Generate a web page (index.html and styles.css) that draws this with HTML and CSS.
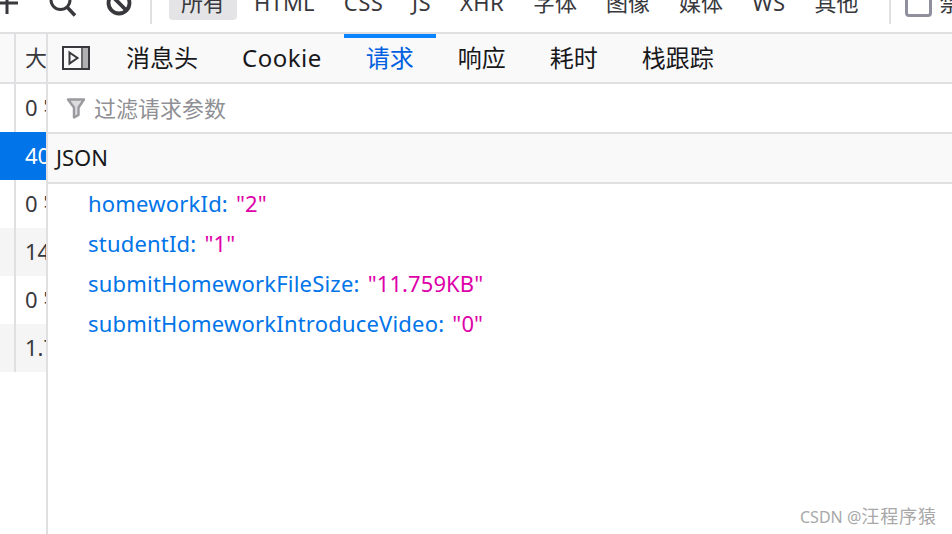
FILE: index.html
```html
<!DOCTYPE html>
<html lang="zh">
<head>
<meta charset="utf-8">
<title>网络请求</title>
<link rel="stylesheet" href="styles.css">
</head>
<body>
<div class="app">
  <header class="toolbar">
    <svg class="tool-icons" width="150" height="32" viewBox="0 0 150 32">
      <path d="M7 -8V14M-4 3H18" fill="none" stroke="#38383d" stroke-width="3"/>
      <circle cx="60.5" cy="0" r="9.5" fill="none" stroke="#38383d" stroke-width="3"/>
      <path d="M67 7L75 15.500" fill="none" stroke="#38383d" stroke-width="3.500"/>
      <circle cx="119" cy="3" r="10.500" fill="none" stroke="#38383d" stroke-width="3.800"/>
      <path d="M111 -5L127 11" fill="none" stroke="#38383d" stroke-width="3.800"/>
    </svg>
    <span class="sep"></span>
    <nav class="filters">
      <span class="filter active">所有</span>
      <span class="filter html">HTML</span>
      <span class="filter latin">CSS</span>
      <span class="filter latin">JS</span>
      <span class="filter latin">XHR</span>
      <span class="filter">字体</span>
      <span class="filter">图像</span>
      <span class="filter">媒体</span>
      <span class="filter latin">WS</span>
      <span class="filter">其他</span>
    </nav>
    <span class="sep sep-right"></span>
    <span class="checkbox"></span>
    <span class="check-label">禁用缓存</span>
  </header>
  <main class="content">
    <aside class="list">
      <div class="row head"><span class="cell">大小</span></div>
      <div class="row"><span class="cell">0 字节</span></div>
      <div class="row selected"><span class="cell">40 字节</span></div>
      <div class="row"><span class="cell">0 字节</span></div>
      <div class="row odd"><span class="cell">14 字节</span></div>
      <div class="row"><span class="cell">0 字节</span></div>
      <div class="row odd"><span class="cell">1.7 KB</span></div>
    </aside>
    <section class="panel">
      <div class="tabs">
        <svg class="panel-toggle" width="28" height="24" viewBox="0 0 28 24">
          <rect x="1" y="1" width="26" height="22" fill="none" stroke="#38383d" stroke-width="2"/>
          <rect x="21" y="2" width="5" height="20" fill="#b1b1b3"/>
          <path d="M20 1V23" stroke="#38383d" stroke-width="1.500"/>
          <path d="M7.500 6.500L15.500 12L7.500 17.500Z" fill="none" stroke="#38383d" stroke-width="2"/>
        </svg>
        <span class="tab">消息头</span>
        <span class="tab tab-latin">Cookie</span>
        <span class="tab current">请求</span>
        <span class="tab">响应</span>
        <span class="tab">耗时</span>
        <span class="tab">栈跟踪</span>
      </div>
      <div class="filter-bar">
        <svg class="funnel" width="20" height="22" viewBox="0 0 20 22">
          <path d="M2 2.500H18L12.500 10.500V18L8 20.500V10.500Z" fill="#dcdcde" stroke="#9a9a9e" stroke-width="2.400" stroke-linejoin="round"/>
        </svg>
        <span class="filter-text">过滤请求参数</span>
      </div>
      <div class="section-title">JSON</div>
      <dl class="props">
        <div class="prop"><dt>homeworkId:</dt><dd>"2"</dd></div>
        <div class="prop"><dt>studentId:</dt><dd>"1"</dd></div>
        <div class="prop"><dt>submitHomeworkFileSize:</dt><dd>"11.759KB"</dd></div>
        <div class="prop"><dt>submitHomeworkIntroduceVideo:</dt><dd>"0"</dd></div>
      </dl>
    </section>
  </main>
  <div class="watermark">CSDN @<span class="watermark-name">汪程序猿</span></div>
</div>
</body>
</html>
```

FILE: styles.css
```css
* { box-sizing: border-box; }
html, body { margin: 0; padding: 0; background: #fff; }
body { font-family: "Noto Sans", "Noto Sans CJK SC", sans-serif; }
.app { position: relative; width: 952px; height: 534px; overflow: hidden; display: flex; flex-direction: column; }

.toolbar { height: 34px; flex: none; display: flex; align-items: flex-start; border-bottom: 2px solid #e0e0e2; overflow: hidden; color: #38383d; font-size: 22px; white-space: nowrap; }
.tool-icons { flex: none; }
.sep { flex: none; width: 2px; height: 24px; background: #e0e0e2; }
.filters { display: flex; gap: 5px; margin-left: 17px; }
.filter { height: 36px; margin-top: -16px; padding: 0 12px; line-height: 36px; border-radius: 4px; }
.filter.html { letter-spacing: 0.2px; }
.filter.latin { letter-spacing: 0.4px; }
.filter.active { background: #e4e4e6; }
.sep-right { margin-left: 19px; }
.checkbox { flex: none; width: 27px; height: 27px; margin: -10px 0 0 14px; border: 3px solid #8f8f9d; border-radius: 4px; }
.check-label { margin: -16px 0 0 7px; line-height: 36px; }

.content { flex: 1; display: flex; min-height: 0; }
.list { width: 48px; flex: none; border-right: 2px solid #e0e0e2; overflow: hidden; color: #38383d; font-size: 22px; white-space: nowrap; }
.row { height: 48px; width: 46px; overflow: hidden; padding-left: 14px; line-height: 46px; }
.cell { display: block; height: 100%; padding-left: 9px; border-left: 2px solid #e0e0e2; }
.row.head { height: 50px; background: #f9f9fa; border-bottom: 2px solid #e0e0e2; }
.row.selected { background: #0074e8; color: #fff; }
.row.selected .cell { border-left-color: #0074e8; }
.row.odd { background: #f5f5f5; }

.panel { flex: 1; min-width: 0; display: flex; flex-direction: column; }
.tabs { height: 50px; flex: none; display: flex; align-items: center; background: #f9f9fa; border-bottom: 2px solid #e0e0e2; padding-left: 14px; font-size: 24px; color: #18181a; }
.panel-toggle { flex: none; margin-right: 14px; }
.tab { height: 48px; padding: 0 22px; border-top: 4px solid transparent; line-height: 40px; }
.tab-latin { letter-spacing: 0.5px; }
.tab.current { border-top-color: #0a84ff; color: #0060df; }
.filter-bar { height: 50px; flex: none; display: flex; align-items: center; gap: 8px; padding: 0 0 2px 18px; border-bottom: 2px solid #e0e0e2; }
.funnel { flex: none; margin-top: 1px; }
.filter-text { font-size: 22px; color: #8f8f94; }
.section-title { height: 50px; flex: none; padding-left: 8px; line-height: 46px; font-size: 22px; color: #18181a; background: #f9f9fa; border-bottom: 2px solid #e0e0e2; }
.props { margin: 0; padding: 0 0 0 40px; font-size: 22px; }
.prop { height: 40px; display: flex; gap: 8px; line-height: 38px; }
.prop dt { color: #0074e8; letter-spacing: 0.2px; }
.prop dd { margin: 0; color: #dd00a9; letter-spacing: 0.1px; }

.watermark { position: absolute; left: 800px; top: 504px; font-size: 16px; line-height: 24px; color: #a8a8a8; white-space: nowrap; }
.watermark-name { font-size: 18px; letter-spacing: 0.9px; }
```
